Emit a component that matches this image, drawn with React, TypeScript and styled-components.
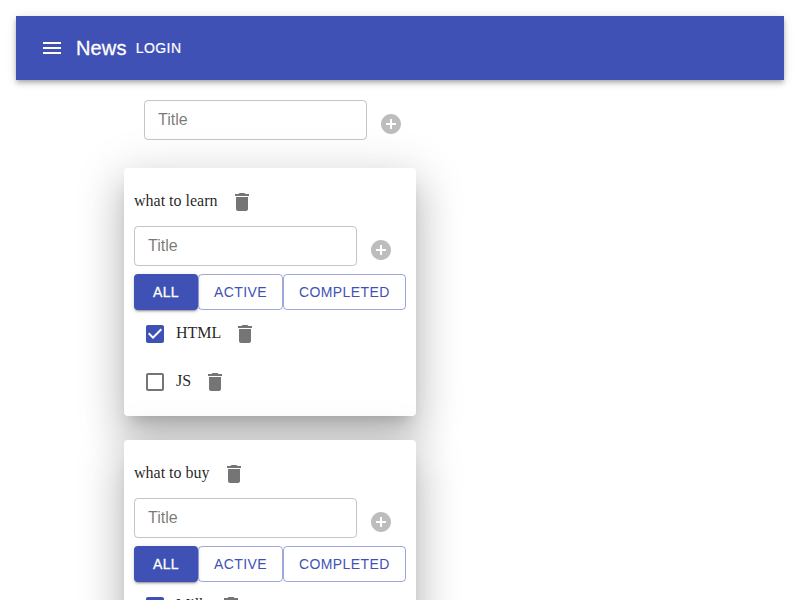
import React from "react";
import styled, { createGlobalStyle, css } from "styled-components";

const Global = createGlobalStyle`
  html, body { margin: 0; height: 600px; overflow: hidden; background: #fff; }
  body { font-family: "Liberation Serif", "Times New Roman", serif; font-size: 16px; color: #000; }
  *, *::before, *::after { box-sizing: border-box; }
`;

const sans = `"Liberation Sans", Arial, sans-serif`;

const Page = styled.div`
  height: 600px;
  padding: 16px 16px 0;
  overflow: hidden;
`;

const AppBar = styled.header`
  height: 64px;
  padding: 0 24px;
  display: flex;
  align-items: center;
  color: #fff;
  background: #3f51b5;
  box-shadow: 0 2px 4px -1px rgba(0, 0, 0, 0.2), 0 4px 5px 0 rgba(0, 0, 0, 0.14),
    0 1px 10px 0 rgba(0, 0, 0, 0.12);
`;

const IconButton = styled.button<{ $tone?: string }>`
  border: 0;
  background: transparent;
  display: inline-flex;
  flex: none;
  padding: 12px;
  color: ${(p) => p.$tone ?? "rgba(0, 0, 0, 0.54)"};
  svg { width: 24px; height: 24px; fill: currentColor; display: block; }
`;

const MenuButton = styled(IconButton)`
  margin-left: -12px;
`;

const BarTitle = styled.h6`
  margin: 0;
  font: 500 20px/32px ${sans};
  letter-spacing: 0.15px;
  -webkit-text-stroke: 0.3px currentColor;
`;

const LoginButton = styled.button`
  border: 0;
  background: transparent;
  color: #fff;
  padding: 6px 8px;
  min-width: 64px;
  font: 500 14px/24.5px ${sans};
  letter-spacing: 0.4px;
  text-transform: uppercase;
  -webkit-text-stroke: 0.2px currentColor;
`;

const Content = styled.main`
  width: 292px;
  margin: 0 0 0 108px;
`;

const AddRow = styled.div`
  display: flex;
  align-items: flex-start;
  height: 48px;
`;

const NewList = styled.div`
  padding: 20px;
`;

const Input = styled.input`
  width: 223px;
  height: 40px;
  flex: none;
  padding: 0 13px;
  border: 1px solid rgba(0, 0, 0, 0.23);
  border-radius: 4px;
  background: transparent;
  font: 16px ${sans};
  outline: 0;
  &::placeholder { color: rgba(0, 0, 0, 0.54); opacity: 1; }
`;

const Card = styled.section`
  height: 248px;
  margin-bottom: 24px;
  padding: 10px;
  background: #fff;
  border-radius: 4px;
  color: rgba(0, 0, 0, 0.87);
  box-shadow: 0 11px 15px -7px rgba(0, 0, 0, 0.2), 0 24px 38px 3px rgba(0, 0, 0, 0.14),
    0 9px 46px 8px rgba(0, 0, 0, 0.12);
`;

const Heading = styled.h3`
  margin: 0;
  height: 48px;
  display: flex;
  align-items: center;
  font-weight: 400;
  font-size: 16px;
`;

const Label = styled.span`
  padding-bottom: 2px;
`;

const Filters = styled.div`
  display: flex;
`;

const Filter = styled.button<{ $active?: boolean }>`
  height: 36px;
  padding: 0 15px;
  border: 1px solid rgba(63, 81, 181, 0.5);
  border-radius: 4px;
  background: transparent;
  color: #3f51b5;
  font: 500 14px/24px ${sans};
  letter-spacing: 0.4px;
  text-transform: uppercase;
  ${(p) =>
    p.$active &&
    css`
      width: 64px;
      border: 0;
      background: #3f51b5;
      color: #fff;
      -webkit-text-stroke: 0.3px currentColor;
      box-shadow: 0 3px 1px -2px rgba(0, 0, 0, 0.2), 0 2px 2px 0 rgba(0, 0, 0, 0.14),
        0 1px 5px 0 rgba(0, 0, 0, 0.12);
    `}
`;

const Task = styled.div`
  height: 48px;
  display: flex;
  align-items: center;
`;

const Check = styled(IconButton)`
  padding: 9px;
`;

const paths = {
  menu: "M3 18h18v-2H3v2zm0-5h18v-2H3v2zm0-7v2h18V6H3z",
  add: "M12 2C6.48 2 2 6.48 2 12s4.48 10 10 10 10-4.48 10-10S17.52 2 12 2zm5 11h-4v4h-2v-4H7v-2h4V7h2v4h4v2z",
  trash: "M6 19c0 1.1.9 2 2 2h8c1.1 0 2-.9 2-2V7H6v12zM19 4h-3.5l-1-1h-5l-1 1H5v2h14V4z",
  checked: "M19 3H5c-1.11 0-2 .9-2 2v14c0 1.1.89 2 2 2h14c1.11 0 2-.9 2-2V5c0-1.1-.89-2-2-2zm-9 14l-5-5 1.41-1.41L10 14.17l7.59-7.59L19 8l-9 9z",
  unchecked: "M19 5v14H5V5h14m0-2H5c-1.1 0-2 .9-2 2v14c0 1.1.9 2 2 2h14c1.1 0 2-.9 2-2V5c0-1.1-.9-2-2-2z",
};

const Icon = ({ name }: { name: keyof typeof paths }) => (
  <svg viewBox="0 0 24 24"><path d={paths[name]} /></svg>
);

const AddItem = () => (
  <AddRow>
    <Input placeholder="Title" />
    <IconButton $tone="rgba(0, 0, 0, 0.26)" aria-label="Add"><Icon name="add" /></IconButton>
  </AddRow>
);

const lists = [
  { title: "what to learn", tasks: [{ name: "HTML", done: true }, { name: "JS", done: false }] },
  { title: "what to buy", tasks: [{ name: "Milk", done: true }] },
];

export default function App() {
  return (
    <Page>
      <Global />
      <AppBar>
        <MenuButton aria-label="Menu" $tone="#fff"><Icon name="menu" /></MenuButton>
        <BarTitle>News</BarTitle>
        <LoginButton>Login</LoginButton>
      </AppBar>
      <Content>
        <NewList><AddItem /></NewList>
        {lists.map((list) => (
          <Card key={list.title}>
            <Heading>
              <Label>{list.title}</Label>
              <IconButton aria-label="Delete list"><Icon name="trash" /></IconButton>
            </Heading>
            <AddItem />
            <Filters>
              <Filter $active>All</Filter>
              <Filter>Active</Filter>
              <Filter>Completed</Filter>
            </Filters>
            {list.tasks.map((task) => (
              <Task key={task.name}>
                <Check $tone={task.done ? "#3f51b5" : undefined} aria-label={task.name}>
                  <Icon name={task.done ? "checked" : "unchecked"} />
                </Check>
                <Label>{task.name}</Label>
                <IconButton aria-label="Delete task"><Icon name="trash" /></IconButton>
              </Task>
            ))}
          </Card>
        ))}
      </Content>
    </Page>
  );
}
